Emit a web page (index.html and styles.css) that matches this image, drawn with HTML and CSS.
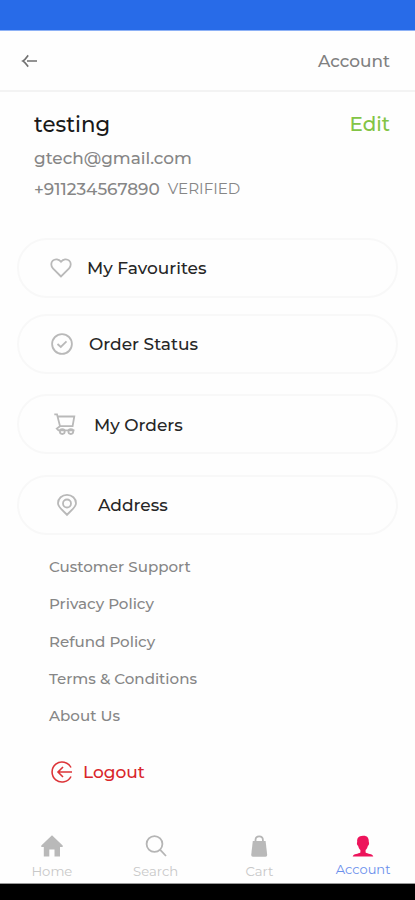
FILE: index.html
```html
<!DOCTYPE html>
<html lang="en">
<head>
<meta charset="utf-8">
<title>Account</title>
<link rel="stylesheet" href="styles.css">
</head>
<body>
<div class="app">
  <div class="statusbar"></div>
  <header class="topbar">
    <svg class="back" viewBox="0 0 18 16"><path d="M16 8H6M7.200 2.300C5.500 4 4.400 6.800 2 8C4.400 9.200 5.500 12 7.200 13.700"/></svg>
    <h1 class="topbar-title">Account</h1>
  </header>
  <section class="profile">
    <div class="profile-head"><h2 class="name">testing</h2><a class="edit">Edit</a></div>
    <div class="email">gtech@gmail.com</div>
    <div class="phone-row"><span class="phone">+911234567890</span><span class="verified">VERIFIED</span></div>
  </section>
  <nav class="cards">
    <a class="card favourites">
      <svg class="icon" viewBox="0 0 22 22"><path d="M11 19.500L2.900 11.300C.700 9 .800 5.600 2.800 3.700C5.100 1.600 8.700 2 11 4.800C13.300 2 16.900 1.600 19.200 3.700C21.200 5.600 21.300 9 19.100 11.300Z"/></svg>
      <span>My Favourites</span>
    </a>
    <a class="card status">
      <svg class="icon" viewBox="0 0 22 22"><circle cx="11" cy="11" r="9.900"/><path d="M6.500 11L9.800 14L15.500 8.300"/></svg>
      <span>Order Status</span>
    </a>
    <a class="card orders">
      <svg class="icon" viewBox="0 0 22 22"><path d="M.300 1.300H3L6 13.200H18.600L20.300 3.500H4M6 13.200L2.800 15.600L4.500 17.300H20.500"/><circle cx="8.300" cy="18.600" r="2.400"/><circle cx="16.800" cy="18.600" r="2.400"/></svg>
      <span>My Orders</span>
    </a>
    <a class="card address">
      <svg class="icon" viewBox="0 0 22 22"><path d="M11 20.800C8 17.200 2 13.500 2 9.200A9 8.400 0 0 1 20 9.200C20 13.500 14 17.200 11 20.800Z"/><circle cx="11" cy="9.500" r="4"/></svg>
      <span>Address</span>
    </a>
  </nav>
  <nav class="links">
    <a>Customer Support</a>
    <a>Privacy Policy</a>
    <a>Refund Policy</a>
    <a>Terms &amp; Conditions</a>
    <a>About Us</a>
  </nav>
  <a class="logout">
    <svg class="icon" viewBox="0 0 22 22"><path d="M20 6.500A10 10 0 1 0 20 15.500M21 11H7M12 6L7 11L12 16"/></svg>
    <span>Logout</span>
  </a>
  <nav class="tabs">
    <a class="tab home"><svg viewBox="0 0 22 22"><path d="M11 .300L.300 10.500V12H2.800V21.500H8.300V14.500H13.500V21.500H19V12H21.700V10.500Z"/></svg><span>Home</span></a>
    <a class="tab search"><svg viewBox="0 0 22 22"><circle cx="9.500" cy="9" r="7.900"/><path d="M15 14.600L21 21"/></svg><span>Search</span></a>
    <a class="tab cart"><svg viewBox="0 0 22 22"><path class="handle" d="M7.500 7V5C7.500 .200 14.900 .200 14.900 5V7"/><path d="M4.800 6H17.600L19.200 20Q19.200 21.700 17.500 21.700H4.900Q3.200 21.700 3.200 20Z"/></svg><span>Cart</span></a>
    <a class="tab account"><svg viewBox="0 0 22 22"><path d="M11 .800C14.800 .500 17 2.500 16.800 7C17.500 8 16.900 10.500 15.900 10.800C15.500 12.700 14.700 14 13.600 15V17.500C15.500 19 20.500 18.500 21.300 21.500H.700C1.500 18.500 6.500 19 8.400 17.500V15C7.300 14 6.500 12.700 6.100 10.800C5.100 10.500 4.500 8 5.200 7C4.800 3.200 6.500 1 11 .800Z"/></svg><span>Account</span></a>
  </nav>
  <div class="systembar"></div>
</div>
</body>
</html>
```
FILE: styles.css
```css
* { box-sizing: border-box; }
body { margin: 0; background: #fefefe; font-family: Montserrat, Inter, sans-serif; font-weight: 500; color: #262626; }
h1, h2 { margin: 0; font-weight: 500; }
svg { display: block; flex: none; overflow: visible; }
.app { width: 415px; height: 900px; display: flex; flex-direction: column; overflow: hidden; white-space: nowrap; }
.statusbar { height: 31px; background: #286be8; border-bottom: 1px solid #8db1f6; }
.topbar { height: 61px; display: flex; align-items: center; justify-content: space-between; padding: 0 25px 0 21px; border-bottom: 2px solid #f3f3f3; }
.back { width: 18px; height: 16px; fill: none; stroke: #707070; stroke-width: 1.7; }
.topbar-title { font-size: 16.9px; color: #808080; line-height: 24px; padding-top: 1px; }

.profile { height: 146px; padding: 17px 25px 0 34px; }
.profile-head { height: 30px; display: flex; justify-content: space-between; line-height: 30px; }
.name { font-size: 21.3px; color: #181818; line-height: 31px; }
.edit { font-size: 19.9px; color: #82c445; }
.email { font-size: 16.9px; color: #868686; line-height: 24px; padding-top: 7px; }
.phone-row { display: flex; gap: 8px; color: #868686; line-height: 24px; padding-top: 7px; }
.phone { font-size: 16.9px; }
.verified { font-size: 15.1px; font-weight: 400; }

.cards { padding: 0 17px; height: 297px; display: flex; flex-direction: column; }
.card { height: 60px; border: 2px solid #f8f8f8; border-radius: 30px; display: flex; align-items: center; font-size: 17px; }
.icon { width: 22px; height: 22px; fill: none; stroke: #b9b9b9; stroke-width: 1.8; }
.favourites { padding-left: 31px; gap: 15px; margin-bottom: 16px; }
.status { padding-left: 32px; gap: 16px; margin-bottom: 20px; }
.orders { padding-left: 35px; gap: 18px; margin-bottom: 21px; }
.orders span { padding-top: 2px; }
.address { padding-left: 37px; gap: 20px; }

.links { padding: 13px 0 0 49px; height: 200px; display: flex; flex-direction: column; font-size: 15.1px; line-height: 37.3px; color: #868686; }

.logout { height: 76px; padding: 0 0 3px 51px; display: flex; align-items: center; gap: 10px; font-size: 17px; color: #d9262b; }
.logout .icon { stroke: #dc3438; stroke-width: 1.6; }

.tabs { height: 73px; display: flex; padding-top: 24px; border-bottom: 1px solid #999; }
.tab { width: 103.75px; display: flex; flex-direction: column; align-items: center; font-size: 13.2px; font-weight: 400; color: #c8c8c8; line-height: 16px; gap: 6px; }
.tab svg { width: 22px; height: 22px; fill: #b9b9b9; }
.tab.search svg, .tab .handle { fill: none; stroke: #b5b5b5; stroke-width: 1.8; }
.account { color: #6a8fec; gap: 4px; font-size: 13px; }
.tab.account svg { fill: #ed145b; }
.systembar { height: 16px; background: #000; }
```
